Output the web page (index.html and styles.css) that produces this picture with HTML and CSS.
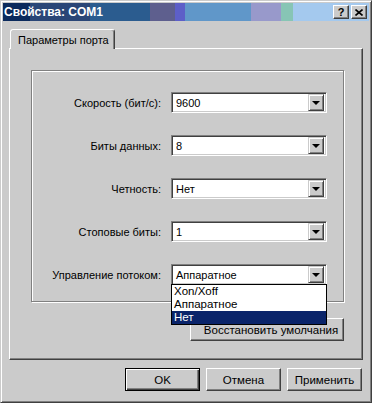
FILE: index.html
```html
<!DOCTYPE html>
<html lang="ru">
<head>
  <meta charset="UTF-8">
  <title>Свойства: COM1</title>
  <link rel="stylesheet" href="styles.css">
</head>
<body>
  <div class="window">
    <div class="titlebar">
      <span class="title">Свойства: COM1</span>
      <div class="caption-buttons">
        <button class="cap-btn">?</button>
        <button class="cap-btn">
          <svg width="8" height="7" viewBox="0 0 8 7"><path d="M0.5 0.5 L7.5 6.5 M7.5 0.5 L0.5 6.5" stroke="#000" stroke-width="1.6" fill="none"/></svg>
        </button>
      </div>
    </div>

    <div class="content">
      <div class="tabs">
        <div class="tab active">Параметры порта</div>
      </div>

      <div class="panel">
        <div class="group">
          <label class="field-label">Скорость (бит/с):</label>
          <div class="combo"><span class="combo-value">9600</span><span class="combo-drop"></span></div>

          <label class="field-label">Биты данных:</label>
          <div class="combo"><span class="combo-value">8</span><span class="combo-drop"></span></div>

          <label class="field-label">Четность:</label>
          <div class="combo"><span class="combo-value">Нет</span><span class="combo-drop"></span></div>

          <label class="field-label">Стоповые биты:</label>
          <div class="combo"><span class="combo-value">1</span><span class="combo-drop"></span></div>

          <label class="field-label">Управление потоком:</label>
          <div class="combo open">
            <span class="combo-value">Аппаратное</span><span class="combo-drop"></span>
            <ul class="combo-list">
              <li>Xon/Xoff</li>
              <li>Аппаратное</li>
              <li class="selected">Нет</li>
            </ul>
          </div>
        </div>

        <div class="panel-actions">
          <button class="btn btn-wide">Восстановить умолчания</button>
        </div>
      </div>

      <div class="footer">
        <button class="btn btn-default">OK</button>
        <button class="btn">Отмена</button>
        <button class="btn">Применить</button>
      </div>
    </div>
  </div>
</body>
</html>
```

FILE: styles.css
```css
/* Classic dialog */
body {
  margin: 0;
  padding: 0;
  font-family: 'Liberation Sans', Arial, sans-serif;
  font-size: 11px;
  color: #000;
  background-color: #cbcbcb;
}

.window {
  width: 372px;
  height: 403px;
  box-sizing: border-box;
  background-color: #cbcbcb;
  border: 1px solid;
  border-color: #cbcbcb #404040 #404040 #cbcbcb;
  box-shadow: inset 1px 1px 0 #fff, inset -1px -1px 0 #808080;
  padding: 2px;
}

.titlebar {
  height: 18px;
  display: flex;
  align-items: center;
  justify-content: space-between;
  padding: 0 2px 0 1px;
  background: linear-gradient(to right,
    #0b2a5c 0, #0b2a5c 27px,
    #2a4677 27px, #2a4677 87px,
    #2b5c8f 87px, #2b5c8f 147px,
    #5e5f8e 147px, #5e5f8e 172px,
    #5d5fc8 172px, #5d5fc8 182px,
    #6097c9 182px, #6097c9 248px,
    #9899cb 248px, #9899cb 278px,
    #87c5b5 278px, #87c5b5 290px,
    #a4c9ee 290px, #a4c9ee 100%);
}

.title {
  color: #fff;
  font-weight: bold;
  font-size: 12px;
}

.caption-buttons {
  display: flex;
  gap: 2px;
}

.cap-btn {
  width: 16px;
  height: 14px;
  padding: 0;
  margin: 0;
  display: flex;
  align-items: center;
  justify-content: center;
  font-family: 'Liberation Sans', Arial, sans-serif;
  font-weight: bold;
  font-size: 11px;
  line-height: 1;
  background-color: #cbcbcb;
  border: 1px solid;
  border-color: #fff #404040 #404040 #fff;
  box-shadow: inset -1px -1px 0 #808080;
}

.content {
  padding: 8px 6px 0 6px;
}

/* Tabs */
.tabs {
  display: flex;
  padding-left: 1px;
}

.tab {
  position: relative;
  z-index: 1;
  width: 105px;
  height: 20px;
  box-sizing: border-box;
  margin-bottom: -1px;
  padding: 4px 0 0 7px;
  white-space: nowrap;
  background-color: #cbcbcb;
  border: 1px solid;
  border-bottom: none;
  border-color: #fff #404040 transparent #fff;
  border-radius: 3px 3px 0 0;
  box-shadow: inset -1px 0 0 #808080;
}

.panel {
  height: 312px;
  box-sizing: border-box;
  padding: 21px 0 0 21px;
  border: 1px solid;
  border-color: #fff #404040 #404040 #fff;
  box-shadow: inset -1px -1px 0 #808080;
}

/* Group box */
.group {
  width: 313px;
  height: 232px;
  box-sizing: border-box;
  padding: 21px 16px 0 0;
  border: 1px solid #808080;
  box-shadow: inset 1px 1px 0 #fff, 1px 1px 0 #fff;
  display: grid;
  grid-template-columns: 1fr 156px;
  grid-auto-rows: 21px;
  column-gap: 10px;
  row-gap: 22px;
}

.field-label {
  align-self: center;
  text-align: right;
}

.combo {
  position: relative;
  display: flex;
  align-items: center;
  height: 21px;
  box-sizing: border-box;
  background-color: #fff;
  border: 1px solid;
  border-color: #808080 #fff #fff #808080;
  box-shadow: inset 1px 1px 0 #404040, inset -1px -1px 0 #cbcbcb;
  padding: 2px;
}

.combo-value {
  flex: 1;
  padding-left: 2px;
}

.combo-drop {
  position: relative;
  width: 16px;
  height: 17px;
  box-sizing: border-box;
  background-color: #cbcbcb;
  border: 1px solid;
  border-color: #cbcbcb #404040 #404040 #cbcbcb;
  box-shadow: inset 1px 1px 0 #fff, inset -1px -1px 0 #808080;
}

.combo-drop::after {
  content: '';
  position: absolute;
  left: 3px;
  top: 6px;
  border-left: 4px solid transparent;
  border-right: 4px solid transparent;
  border-top: 4px solid #000;
}

.combo-list {
  position: absolute;
  z-index: 2;
  left: -1px;
  top: 19px;
  width: 156px;
  box-sizing: border-box;
  margin: 0;
  padding: 0;
  list-style: none;
  background-color: #fff;
  border: 1px solid #000;
}

.combo-list li {
  height: 13px;
  line-height: 13px;
  padding-left: 2px;
  font-size: 11.5px;
}

.combo-list li.selected {
  background-color: #0a246a;
  color: #fff;
}

/* Buttons */
.panel-actions {
  width: 313px;
  display: flex;
  justify-content: flex-end;
  margin-top: 16px;
}

.btn {
  width: 75px;
  height: 23px;
  padding: 0;
  font-family: 'Liberation Sans', Arial, sans-serif;
  font-size: 11.5px;
  color: #000;
  background-color: #cbcbcb;
  border: 1px solid;
  border-color: #fff #404040 #404040 #fff;
  box-shadow: inset -1px -1px 0 #808080;
}

.btn-wide {
  width: 154px;
  padding-left: 8px;
}

.btn-default {
  border: 1px solid #000;
  box-shadow: inset 1px 1px 0 #fff, inset -1px -1px 0 #404040, inset -2px -2px 0 #808080;
}

.footer {
  display: flex;
  justify-content: flex-end;
  gap: 6px;
  margin-top: 8px;
  padding-right: 1px;
}
```
